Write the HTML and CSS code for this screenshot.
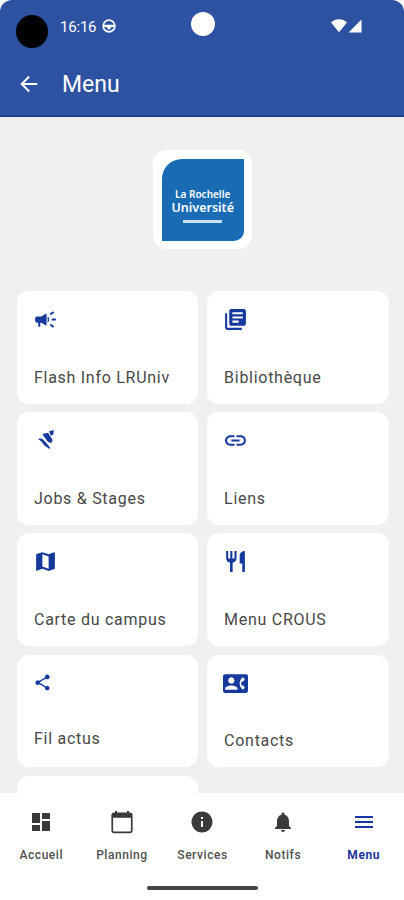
FILE: index.html
```
<!DOCTYPE html>
<html lang="fr">
<head>
<meta charset="utf-8">
<title>Menu</title>
<link rel="stylesheet" href="styles.css">
</head>
<body>
<div class="phone">
  <header class="header">
    <div class="status">
      <span class="dot"></span>
      <span class="time">16:16</span>
      <svg class="status-icon" viewBox="0 0 14 14"><circle cx="7" cy="7" r="5.8" fill="none" stroke="#fff" stroke-width="1.8"/><path d="M1.5 5.8h11v2.3h-11zM4.700 8h4.600L7.800 10.500H6.200z" fill="#fff"/></svg>
      <span class="camera"></span>
      <svg class="signal" viewBox="0 0 31 14"><path d="M0 3.500C4-1 12-1 16 3.500L8 13.300zM17.500 13.500L30.500.5v13z" fill="#fff"/></svg>
    </div>
    <div class="bar">
      <svg class="back" viewBox="0 0 18 18"><path d="M17.300 9H2M9.200 1.500L1.700 9l7.500 7.500" fill="none" stroke="#fff" stroke-width="2"/></svg>
      <h1 class="title">Menu</h1>
    </div>
  </header>
  <main class="content">
    <div class="logo">
      <div class="logo-mark">
        <span class="logo-top">La Rochelle</span>
        <span class="logo-name">Université</span>
        <span class="logo-line"></span>
      </div>
    </div>
    <div class="grid">
      <a class="card"><svg class="icon" viewBox="0 0 24 24"><path d="M18 11v2h4v-2h-4zm-2 6.610c.96.71 2.210 1.650 3.200 2.390.4-.53.8-1.070 1.200-1.600-.99-.74-2.240-1.680-3.200-2.400-.4.54-.8 1.080-1.200 1.610zM20.400 5.600c-.4-.53-.8-1.070-1.200-1.600-.99.74-2.240 1.680-3.200 2.400.4.53.8 1.070 1.200 1.600.96-.72 2.210-1.650 3.200-2.400zM4 9c-1.100 0-2 .9-2 2v2c0 1.100.9 2 2 2h1v4h2v-4h1l5 3V6L8 9H4zm11.500 3c0-1.330-.58-2.530-1.500-3.350v6.690c.92-.81 1.500-2.010 1.500-3.340z"/></svg><span class="label">Flash Info LRUniv</span></a>
      <a class="card"><svg class="icon" viewBox="0 0 24 24"><path d="M4 6H2v14c0 1.100.9 2 2 2h14v-2H4V6zm16-4H8c-1.100 0-2 .9-2 2v12c0 1.100.9 2 2 2h12c1.100 0 2-.9 2-2V4c0-1.100-.9-2-2-2zm-1 9H9V9h10v2zm-4 4H9v-2h6v2zm4-8H9V5h10v2z"/></svg><span class="label">Bibliothèque</span></a>
      <a class="card"><svg class="icon" viewBox="0 0 24 24"><path d="M15.500 3.200L20 2L19.500 6.500L17 7.200ZM9 5.800L14.500 4.600L18.800 11.500L17.800 14.500L14.500 13.500L10.500 8.200ZM4.500 10.300L8.500 10L12 13.500L16.500 19L15.800 20.200L11 16.800L8 13Z"/></svg><span class="label">Jobs &amp; Stages</span></a>
      <a class="card"><svg class="icon" viewBox="0 0 24 24"><path d="M3.900 12c0-1.710 1.390-3.100 3.100-3.100h4V7H7c-2.760 0-5 2.240-5 5s2.240 5 5 5h4v-1.900H7c-1.710 0-3.100-1.390-3.100-3.100zM8 13h8v-2H8v2zm9-6h-4v1.900h4c1.710 0 3.100 1.390 3.100 3.100s-1.390 3.100-3.100 3.100h-4V17h4c2.760 0 5-2.240 5-5s-2.240-5-5-5z"/></svg><span class="label">Liens</span></a>
      <a class="card"><svg class="icon" viewBox="0 0 24 24"><path d="M20.500 3l-.16.03L15 5.100 9 3 3.360 4.900c-.21.07-.36.25-.36.480V20.500c0 .28.220.5.5.5l.16-.03L9 18.900l6 2.100 5.640-1.900c.21-.07.36-.25.36-.480V3.500c0-.28-.22-.5-.5-.5zM15 19l-6-2.110V5l6 2.110V19z"/></svg><span class="label">Carte du campus</span></a>
      <a class="card"><svg class="icon" viewBox="0 0 24 24"><path d="M11 9H9V2H7v7H5V2H3v7c0 2.120 1.660 3.840 3.750 3.970V22h2.500v-9.030C11.340 12.840 13 11.120 13 9V2h-2v7zm5-3v8h2.500v8H21V2c-2.760 0-5 2.240-5 4z"/></svg><span class="label">Menu CROUS</span></a>
      <a class="card"><svg class="icon icon-share" viewBox="0 0 24 24"><path d="M18 16.080c-.76 0-1.440.3-1.960.77L8.910 12.700c.05-.23.09-.46.09-.7s-.04-.47-.09-.7l7.050-4.110c.54.5 1.250.81 2.040.81 1.660 0 3-1.340 3-3s-1.340-3-3-3-3 1.340-3 3c0 .24.040.47.090.7L8.040 9.810C7.500 9.310 6.790 9 6 9c-1.660 0-3 1.340-3 3s1.340 3 3 3c.79 0 1.500-.31 2.040-.81l7.120 4.160c-.05.21-.08.43-.08.65 0 1.610 1.310 2.920 2.920 2.920s2.920-1.310 2.920-2.920-1.310-2.920-2.920-2.920z"/></svg><span class="label label-raised">Fil actus</span></a>
      <a class="card"><svg class="icon" viewBox="0 0 24 24"><path d="M22 3H2C.9 3 0 3.900 0 5v14c0 1.100.9 2 2 2h20c1.100 0 1.990-.9 1.990-2L24 5c0-1.100-.9-2-2-2zM8 6c1.660 0 3 1.340 3 3s-1.340 3-3 3-3-1.340-3-3 1.340-3 3-3zm6 12H2v-1c0-2 4-3.100 6-3.100s6 1.100 6 3.100v1zm3.850-4h1.640L21 16l-1.990 1.990c-1.310-.98-2.280-2.380-2.730-3.990-.18-.64-.28-1.310-.28-2s.1-1.360.28-2c.45-1.620 1.420-3.010 2.730-3.990L21 8l-1.510 2h-1.640c-.22.63-.35 1.300-.35 2s.13 1.370.35 2z"/></svg><span class="label">Contacts</span></a>
      <a class="card"></a>
    </div>
  </main>
  <footer class="footer">
    <nav class="tabs">
      <a class="tab"><svg class="tab-icon" viewBox="0 0 24 24"><path d="M3 13h8V3H3v10zm0 8h8v-6H3v6zm10 0h8V11h-8v10zm0-18v6h8V3h-8z"/></svg>Accueil</a>
      <a class="tab"><svg class="tab-icon" viewBox="0 0 24 24"><path d="M20.200 2.500H19V1h-2v1.500H7V1H5v1.500H3.800c-1.300 0-2.400 1-2.400 2.300v16c0 1.300 1.100 2.400 2.400 2.400h16.400c1.300 0 2.400-1.100 2.400-2.400v-16c0-1.300-1.100-2.300-2.400-2.300zM20.900 20.500c0 .5-.4 1-1 1H4.100c-.6 0-1-.5-1-1V7.800h17.800z"/></svg>Planning</a>
      <a class="tab"><svg class="tab-icon" viewBox="0 0 24 24"><path d="M12 1.500C6.200 1.500 1.500 6.200 1.500 12S6.200 22.500 12 22.500 22.500 17.800 22.500 12 17.800 1.500 12 1.500zm1 15.500h-2v-6h2v6zm0-8h-2V7h2v2z"/></svg>Services</a>
      <a class="tab"><svg class="tab-icon" viewBox="0 0 24 24"><path d="M12 22c1.100 0 2-.9 2-2h-4c0 1.100.89 2 2 2zm6-6v-5c0-3.070-1.640-5.640-4.500-6.320V4c0-.83-.67-1.500-1.500-1.500s-1.500.67-1.500 1.500v.68C7.630 5.360 6 7.920 6 11v5l-2 2v1h16v-1l-2-2z"/></svg>Notifs</a>
      <a class="tab tab-active"><svg class="tab-icon" viewBox="0 0 24 24"><path d="M3 18h18v-2H3v2zm0-5h18v-2H3v2zm0-7v2h18V6H3z"/></svg>Menu</a>
    </nav>
    <div class="handle"></div>
  </footer>
</div>
</body>
</html>
```
FILE: styles.css
```
* { box-sizing: border-box; }

body {
  margin: 0;
  background: #fff;
  font-family: Roboto, "Liberation Sans", sans-serif;
}

.phone {
  width: 404px;
  height: 900px;
  display: flex;
  flex-direction: column;
  overflow: hidden;
}

.header {
  flex: none;
  height: 117px;
  background: #2e52a2;
  border-bottom: 2px solid #1a4296;
  border-radius: 12px 12px 0 0;
}

.status {
  position: relative;
  height: 54px;
  display: flex;
  align-items: center;
  padding: 0 42px 0 16px;
}

.dot {
  width: 32px;
  height: 33px;
  margin-top: 9px;
  border-radius: 50%;
  background: #000;
}

.time {
  margin-left: 12px;
  width: 36px;
  font-size: 15px;
  letter-spacing: -0.2px;
  color: #fff;
  white-space: nowrap;
}

.status-icon {
  width: 14px;
  height: 14px;
  margin-left: 6px;
  margin-top: -2px;
}

.camera {
  position: absolute;
  left: 191px;
  top: 12px;
  width: 24px;
  height: 24px;
  border-radius: 50%;
  background: #fff;
}

.signal {
  width: 31px;
  height: 14px;
  margin-left: auto;
  margin-top: -2px;
}

.bar {
  height: 62px;
  display: flex;
  align-items: center;
  padding-left: 20px;
}

.back {
  width: 18px;
  height: 18px;
  margin-top: -3px;
}

.title {
  margin: 0 0 0 24px;
  font-size: 23px;
  font-weight: 400;
  line-height: 30px;
  color: #fff;
}

.content {
  flex: 1;
  min-height: 0;
  overflow: hidden;
  background: #f0f0f0;
  padding: 33px 15.500px 0 17px;
}

.logo {
  width: 99px;
  height: 99px;
  margin: 0 auto;
  padding: 8.500px;
  border-radius: 14px;
  background: #fff;
}

.logo-mark {
  width: 82px;
  height: 82px;
  padding-top: 28px;
  border-radius: 20px 0 10px 0;
  background: #196cb4;
  color: #fff;
  display: flex;
  flex-direction: column;
  align-items: center;
  font-family: "Noto Sans", sans-serif;
  font-weight: 600;
  white-space: nowrap;
}

.logo-top {
  font-size: 10px;
  line-height: 14px;
}

.logo-name {
  font-size: 12.500px;
  line-height: 14px;
}

.logo-line {
  width: 39px;
  height: 3px;
  margin-top: 5px;
  background: #c9e0f4;
}

.grid {
  margin-top: 42px;
  display: grid;
  grid-template-columns: 1fr 1fr;
  grid-auto-rows: 112.500px;
  gap: 8.700px;
}

.card {
  display: flex;
  flex-direction: column;
  justify-content: space-between;
  padding: 16px 16px 16px 17px;
  border-radius: 12px;
  background: #fff;
}

.icon {
  width: 25px;
  height: 25px;
  margin-left: -1px;
  fill: #153a9c;
}

.icon-share {
  width: 19px;
  height: 19px;
  margin-top: 2px;
}

.label {
  font-size: 16px;
  line-height: 20px;
  letter-spacing: 0.720px;
  color: #484848;
  white-space: nowrap;
}

.label-raised {
  margin-bottom: 2px;
}

.footer {
  flex: none;
  height: 107px;
  background: #fff;
}

.tabs {
  height: 93px;
  display: grid;
  grid-template-columns: repeat(5, 1fr);
  padding-left: 1px;
}

.tab {
  display: flex;
  flex-direction: column;
  align-items: center;
  gap: 13px;
  padding-top: 17px;
  font-size: 12px;
  font-weight: 500;
  line-height: 16px;
  letter-spacing: 0.550px;
  color: #505050;
}

.tab-icon {
  width: 24px;
  height: 24px;
  fill: #3a3a3a;
}

.tab-active {
  font-weight: 700;
  color: #1b35a0;
}

.tab-active .tab-icon {
  fill: #1b35a0;
}

.handle {
  width: 111px;
  height: 4px;
  margin: 0 auto;
  border-radius: 2px;
  background: #444;
}
```
